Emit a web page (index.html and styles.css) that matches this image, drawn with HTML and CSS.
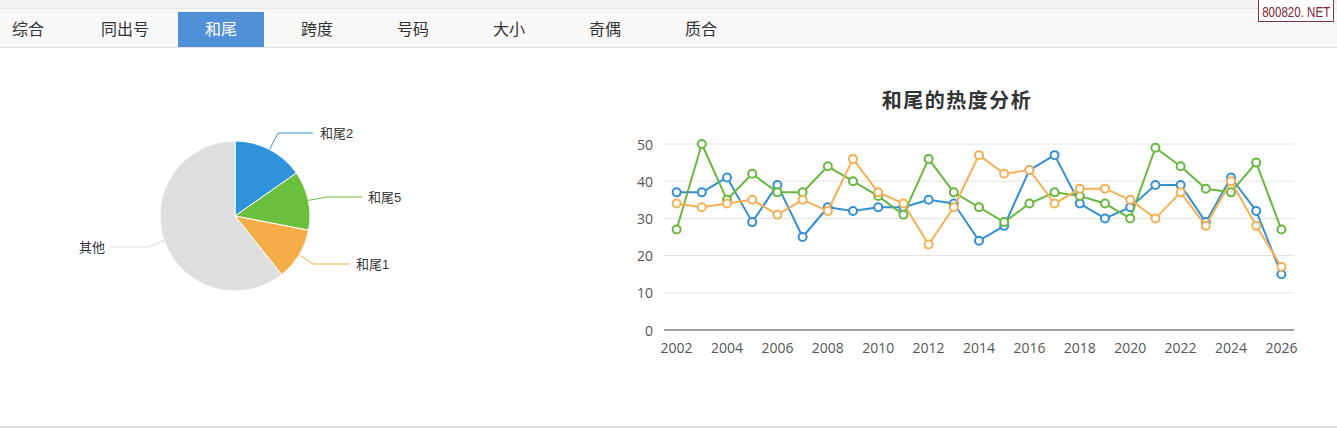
FILE: index.html
```html
<!DOCTYPE html>
<html lang="zh-CN">
<head>
<meta charset="utf-8">
<title>和尾</title>
<link rel="stylesheet" href="styles.css">
</head>
<body>
<div class="topstrip"></div>
<nav class="tabs">
  <a class="tab first">综合</a>
  <a class="tab">同出号</a>
  <a class="tab active">和尾</a>
  <a class="tab">跨度</a>
  <a class="tab">号码</a>
  <a class="tab">大小</a>
  <a class="tab">奇偶</a>
  <a class="tab">质合</a>
</nav>
<div class="badge"><span class="badge-text">800820. NET</span></div>
<main class="content">
  <svg class="pie" width="620" height="378" viewBox="0 0 620 378">
    <path class="s-blue" d="M235,168 L235,93 A75,75 0 0 1 296.4,125 Z"/>
    <path class="s-green" d="M235,168 L296.4,125 A75,75 0 0 1 308.6,182.3 Z"/>
    <path class="s-orange" d="M235,168 L308.6,182.3 A75,75 0 0 1 281.7,226.7 Z"/>
    <path class="s-grey" d="M235,168 L281.7,226.7 A75,75 0 1 1 235,93 Z"/>
    <polyline class="ll-blue" points="269.6,101.5 278,85 313,85"/>
    <polyline class="ll-green" points="308.4,152.4 327,149 362,149"/>
    <polyline class="ll-orange" points="299.1,206.9 313,216 350,216"/>
    <polyline class="ll-grey" points="164.2,192.7 148,199 110,199"/>
    <text class="plabel" x="320" y="85">和尾2</text>
    <text class="plabel" x="368" y="149">和尾5</text>
    <text class="plabel" x="356" y="216">和尾1</text>
    <text class="plabel end" x="105" y="199">其他</text>
  </svg>
  <svg class="line" width="717" height="378" viewBox="0 0 717 378">
    <defs>
      <marker id="mb" markerUnits="userSpaceOnUse" markerWidth="12" markerHeight="12" refX="6" refY="6" viewBox="0 0 12 12"><circle cx="6" cy="6" r="4" class="m-blue"/></marker>
      <marker id="mg" markerUnits="userSpaceOnUse" markerWidth="12" markerHeight="12" refX="6" refY="6" viewBox="0 0 12 12"><circle cx="6" cy="6" r="4" class="m-green"/></marker>
      <marker id="mo" markerUnits="userSpaceOnUse" markerWidth="12" markerHeight="12" refX="6" refY="6" viewBox="0 0 12 12"><circle cx="6" cy="6" r="4" class="m-orange"/></marker>
    </defs>
    <text class="title" x="337" y="53">和尾的热度分析</text>
    <g class="grid">
      <line x1="44" y1="96" x2="674" y2="96"/>
      <line x1="44" y1="133.2" x2="674" y2="133.2"/>
      <line x1="44" y1="170.4" x2="674" y2="170.4"/>
      <line x1="44" y1="207.6" x2="674" y2="207.6"/>
      <line x1="44" y1="244.8" x2="674" y2="244.8"/>
    </g>
    <line class="axis" x1="44" y1="282" x2="674" y2="282"/>
    <g class="ylab">
      <text x="33" y="96">50</text>
      <text x="33" y="133.2">40</text>
      <text x="33" y="170.4">30</text>
      <text x="33" y="207.6">20</text>
      <text x="33" y="244.8">10</text>
      <text x="33" y="282">0</text>
    </g>
    <g class="xlab">
      <text x="56.6" y="299">2002</text>
      <text x="107" y="299">2004</text>
      <text x="157.4" y="299">2006</text>
      <text x="207.8" y="299">2008</text>
      <text x="258.2" y="299">2010</text>
      <text x="308.6" y="299">2012</text>
      <text x="359" y="299">2014</text>
      <text x="409.4" y="299">2016</text>
      <text x="459.8" y="299">2018</text>
      <text x="510.2" y="299">2020</text>
      <text x="560.6" y="299">2022</text>
      <text x="611" y="299">2024</text>
      <text x="661.4" y="299">2026</text>
    </g>
    <polyline class="ser-blue" points="56.6,144.36 81.8,144.36 107,129.48 132.2,174.12 157.4,136.92 182.6,189 207.8,159.24 233,162.96 258.2,159.24 283.4,159.24 308.6,151.8 333.8,155.52 359,192.72 384.2,177.84 409.4,122.04 434.6,107.16 459.8,155.52 485,170.4 510.2,159.24 535.4,136.92 560.6,136.92 585.8,174.12 611,129.48 636.2,162.96 661.4,226.2"/>
    <polyline class="ser-green" points="56.6,181.56 81.8,96 107,151.8 132.2,125.76 157.4,144.36 182.6,144.36 207.8,118.32 233,133.2 258.2,148.08 283.4,166.68 308.6,110.88 333.8,144.36 359,159.24 384.2,174.12 409.4,155.52 434.6,144.36 459.8,148.08 485,155.52 510.2,170.4 535.4,99.72 560.6,118.32 585.8,140.64 611,144.36 636.2,114.6 661.4,181.56"/>
    <polyline class="ser-orange" points="56.6,155.52 81.8,159.24 107,155.52 132.2,151.8 157.4,166.68 182.6,151.8 207.8,162.96 233,110.88 258.2,144.36 283.4,155.52 308.6,196.44 333.8,159.24 359,107.16 384.2,125.76 409.4,122.04 434.6,155.52 459.8,140.64 485,140.64 510.2,151.8 535.4,170.4 560.6,144.36 585.8,177.84 611,133.2 636.2,177.84 661.4,218.76"/>
  </svg>
</main>
</body>
</html>
```
FILE: styles.css
```css
html, body {
  margin: 0;
  padding: 0;
  background: #ffffff;
}
body {
  position: relative;
  width: 1337px;
  height: 429px;
  overflow: hidden;
  font-family: "Liberation Sans", "Noto Sans CJK SC", sans-serif;
  color: #333;
}
.topstrip {
  height: 8px;
  background: #f3f3f3;
  border-bottom: 1px solid #e6e6e6;
}
.tabs {
  display: flex;
  height: 35px;
  padding-top: 3px;
  background: #f8f8f8;
  border-bottom: 1px solid #e2e2e2;
}
.tab {
  width: 86px;
  margin-right: 10px;
  height: 35px;
  line-height: 36px;
  text-align: center;
  font-size: 16px;
  color: #333;
  cursor: pointer;
}
.tab.first {
  width: 60px;
  padding-left: 12px;
  text-align: left;
}
.tab.active {
  background: #4f90d6;
  color: #ffffff;
}
.badge {
  position: absolute;
  top: -1px;
  left: 1258px;
  width: 74px;
  height: 21px;
  border: 1px solid #8a3343;
  background: #ffffff;
  overflow: hidden;
  white-space: nowrap;
  text-align: center;
}
.badge-text {
  display: inline-block;
  color: #7a2232;
  font-family: "Liberation Sans", sans-serif;
  font-size: 15px;
  line-height: 23px;
  transform: scaleX(0.77);
  transform-origin: center;
  margin: 0 -12px;
}
.content {
  display: flex;
  height: 378px;
  border-bottom: 2px solid #dcdcdc;
}
.pie, .line {
  display: block;
  flex: none;
}
.s-blue { fill: #2f93dc; stroke: #fff; stroke-width: 1; }
.s-green { fill: #6abf3c; stroke: #fff; stroke-width: 1; }
.s-orange { fill: #f5ae47; stroke: #fff; stroke-width: 1; }
.s-grey { fill: #dedede; stroke: #fff; stroke-width: 1; }
.ll-blue, .ll-green, .ll-orange, .ll-grey { fill: none; stroke-width: 1; }
.ll-blue { stroke: #2f93dc; }
.ll-green { stroke: #6abf3c; }
.ll-orange { stroke: #f5ae47; }
.ll-grey { stroke: #dedede; }
.plabel {
  font-family: "Liberation Sans", "Noto Sans CJK SC", sans-serif;
  font-size: 13px;
  fill: #333;
  dominant-baseline: central;
}
.plabel.end { text-anchor: end; }
.title {
  font-family: "Liberation Sans", "Noto Sans CJK SC", sans-serif;
  font-size: 20px;
  font-weight: bold;
  fill: #333;
  text-anchor: middle;
  dominant-baseline: central;
  letter-spacing: 1.5px;
}
.grid line { stroke: #e2e2e2; stroke-width: 1; }
.axis { stroke: #444; stroke-width: 1.2; }
.ylab text, .xlab text {
  font-family: "Open Sans", "Liberation Sans", sans-serif;
  font-size: 14px;
  fill: #555;
  dominant-baseline: central;
}
.ylab text { text-anchor: end; }
.xlab text { text-anchor: middle; }
.ser-blue, .ser-green, .ser-orange { fill: none; stroke-width: 2; stroke-linejoin: round; }
.ser-blue { stroke: #3590d2; marker-start: url(#mb); marker-mid: url(#mb); marker-end: url(#mb); }
.ser-green { stroke: #68b840; marker-start: url(#mg); marker-mid: url(#mg); marker-end: url(#mg); }
.ser-orange { stroke: #f3b055; marker-start: url(#mo); marker-mid: url(#mo); marker-end: url(#mo); }
.m-blue { fill: #fff; stroke: #3590d2; stroke-width: 2; }
.m-green { fill: #fff; stroke: #68b840; stroke-width: 2; }
.m-orange { fill: #fff; stroke: #f3b055; stroke-width: 2; }
```
